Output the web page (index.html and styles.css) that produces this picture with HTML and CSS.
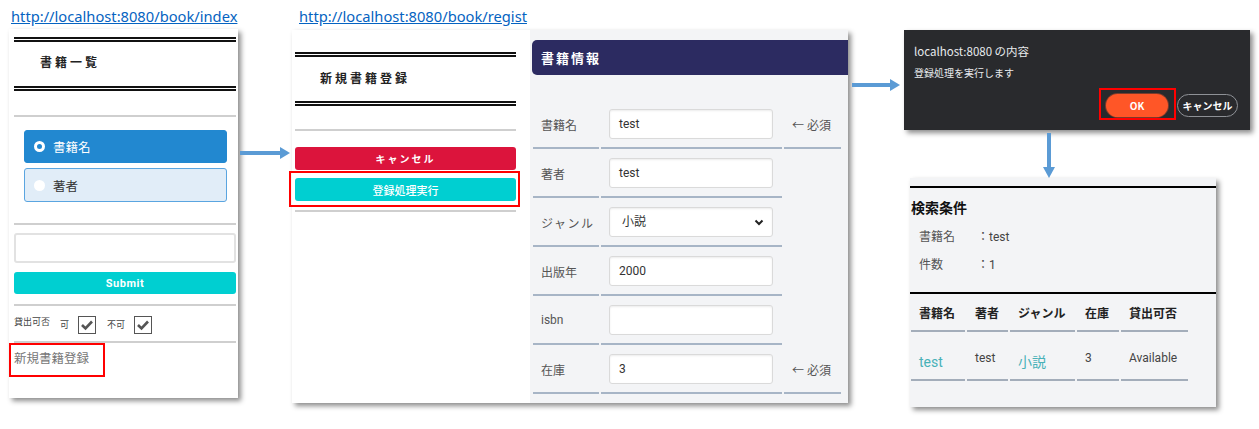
FILE: index.html
```html
<!DOCTYPE html>
<html lang="ja">
<head>
    <meta charset="UTF-8">
    <meta name="viewport" content="width=device-width, initial-scale=1.0">
    <title>書籍管理 | 新規登録の流れ</title>
    <link rel="stylesheet" href="styles.css">
</head>
<body>
<div class="canvas">

    <!-- 一覧画面 -->
    <a class="url url-index" href="#">http://localhost:8080/book/index</a>
    <section class="shot index-shot">
        <div class="dbl"></div>
        <h1 class="page-title">書籍一覧</h1>
        <div class="dbl"></div>
        <div class="rule rule-top"></div>
        <div class="radio-group">
            <label class="radio-box checked"><span class="dot"></span>書籍名</label>
            <label class="radio-box"><span class="dot"></span>著者</label>
        </div>
        <div class="rule rule-search"></div>
        <div class="search-input"></div>
        <button class="btn btn-cyan btn-submit">Submit</button>
        <div class="rule rule-submit"></div>
        <div class="check-row">
            <span class="check-title">貸出可否</span>
            <span class="check-label">可</span>
            <svg class="check" width="18" height="18" viewBox="0 0 18 18"><rect x="0.5" y="0.5" width="17" height="17" fill="#fff" stroke="#555"/><polyline points="4,9 7.5,12.5 14,5.5" fill="none" stroke="#555" stroke-width="2.6"/></svg>
            <span class="check-label">不可</span>
            <svg class="check" width="18" height="18" viewBox="0 0 18 18"><rect x="0.5" y="0.5" width="17" height="17" fill="#fff" stroke="#555"/><polyline points="4,9 7.5,12.5 14,5.5" fill="none" stroke="#555" stroke-width="2.6"/></svg>
        </div>
        <div class="rule rule-check"></div>
        <a class="new-link" href="#">新規書籍登録</a>
    </section>

    <!-- 登録画面 -->
    <a class="url url-regist" href="#">http://localhost:8080/book/regist</a>
    <section class="shot regist-shot">
        <div class="side">
            <div class="dbl"></div>
            <h1 class="page-title">新規書籍登録</h1>
            <div class="dbl"></div>
            <div class="rule rule-side"></div>
            <button class="btn btn-red">キャンセル</button>
            <button class="btn btn-cyan btn-regist">登録処理実行</button>
            <div class="rule rule-side-end"></div>
        </div>
        <div class="form-area">
            <div class="form-head">書籍情報</div>
            <table class="form-table">
                <tr>
                    <th>書籍名</th>
                    <td class="input-cell"><div class="field">test</div></td>
                    <td class="note">← 必須</td>
                </tr>
                <tr>
                    <th>著者</th>
                    <td class="input-cell"><div class="field">test</div></td>
                </tr>
                <tr>
                    <th class="wide">ジャンル</th>
                    <td class="input-cell">
                        <div class="field select">小説
                            <svg width="10" height="7" viewBox="0 0 10 7"><polyline points="1.5,1.5 5,5 8.5,1.5" fill="none" stroke="#222" stroke-width="2"/></svg>
                        </div>
                    </td>
                </tr>
                <tr>
                    <th>出版年</th>
                    <td class="input-cell"><div class="field">2000</div></td>
                </tr>
                <tr>
                    <th>isbn</th>
                    <td class="input-cell"><div class="field"></div></td>
                </tr>
                <tr>
                    <th>在庫</th>
                    <td class="input-cell"><div class="field">3</div></td>
                    <td class="note">← 必須</td>
                </tr>
            </table>
        </div>
    </section>

    <!-- 確認ダイアログ -->
    <section class="shot dialog">
        <p class="dlg-title">localhost:8080 の内容</p>
        <p class="dlg-msg">登録処理を実行します</p>
        <div class="dlg-actions">
            <button class="pill pill-ok">OK</button>
            <button class="pill pill-cancel">キャンセル</button>
        </div>
    </section>

    <!-- 検索結果 -->
    <section class="shot result-shot">
        <div class="black-line"></div>
        <h2 class="cond-title">検索条件</h2>
        <div class="cond">
            <div class="cond-row"><span class="cond-key">書籍名</span><span>：test</span></div>
            <div class="cond-row"><span class="cond-key">件数</span><span>：1</span></div>
        </div>
        <div class="black-line line-table"></div>
        <table class="result-table">
            <tr>
                <th class="c-name">書籍名</th>
                <th class="c-author">著者</th>
                <th class="c-genre">ジャンル</th>
                <th class="c-stock">在庫</th>
                <th class="c-lend">貸出可否</th>
            </tr>
            <tr>
                <td><a class="teal" href="#">test</a></td>
                <td>test</td>
                <td><a class="teal" href="#">小説</a></td>
                <td>3</td>
                <td>Available</td>
            </tr>
        </table>
    </section>

    <!-- 矢印 -->
    <svg class="arrow arrow-1" width="52" height="14" viewBox="0 0 52 14"><rect x="0" y="5" width="42" height="4" fill="#5b9bd5"/><polygon points="40,1 50,7 40,13" fill="#5b9bd5"/></svg>
    <svg class="arrow arrow-2" width="50" height="14" viewBox="0 0 50 14"><rect x="0" y="5" width="40" height="4" fill="#5b9bd5"/><polygon points="38,1 48,7 38,13" fill="#5b9bd5"/></svg>
    <svg class="arrow arrow-3" width="14" height="46" viewBox="0 0 14 46"><rect x="5" y="0" width="4" height="36" fill="#5b9bd5"/><polygon points="1,34 13,34 7,45" fill="#5b9bd5"/></svg>

    <!-- 赤枠 -->
    <div class="mark mark-link"></div>
    <div class="mark mark-btn"></div>
    <div class="mark mark-ok"></div>

</div>
</body>
</html>
```

FILE: styles.css
```css
/* General */
* {
    box-sizing: border-box;
}

body {
    margin: 0;
    background-color: #fff;
    font-family: Roboto, "Noto Sans CJK JP", sans-serif;
    color: #333;
}

.canvas {
    position: relative;
    width: 1259px;
    height: 429px;
    overflow: hidden;
}

.url {
    position: absolute;
    top: 7px;
    font-family: "Noto Sans", "Open Sans", sans-serif;
    font-size: 14.7px;
    line-height: 19px;
    color: #0563c1;
    text-decoration: underline;
}

.url-index {
    left: 11px;
}

.url-regist {
    left: 299px;
}

.shot {
    position: absolute;
    box-shadow: 3px 3px 5px rgba(0, 0, 0, 0.45);
}

/* shared bits */
.dbl {
    height: 5px;
    border-top: 2px solid #111;
    border-bottom: 2px solid #111;
}

.rule {
    height: 2px;
    background-color: #cfcfcf;
}

.page-title {
    margin: 0;
    font-family: "Noto Sans CJK JP", sans-serif;
    font-size: 12px;
    font-weight: 700;
    letter-spacing: 3px;
    color: #222;
}

.btn {
    display: block;
    width: 100%;
    border: none;
    border-radius: 3px;
    color: #fff;
    font-family: Roboto, "Noto Sans CJK JP", sans-serif;
    font-weight: 700;
    padding: 0;
}

.btn-cyan {
    background-color: #00cfd1;
}

.btn-red {
    background-color: #dc143c;
}

/* Index page */
.index-shot {
    left: 9px;
    top: 29px;
    width: 229px;
    height: 369px;
    background-color: #fff;
    padding: 0 2px 0 5px;
}

.index-shot .dbl:first-child {
    margin-top: 8px;
}

.index-shot .page-title {
    height: 40px;
    line-height: 40px;
    padding-left: 26px;
}

.index-shot .page-title + .dbl {
    margin-top: 4px;
}

.rule-top {
    margin-top: 24px;
}

.radio-group {
    padding: 13px 9px 0 10px;
}

.radio-box {
    display: flex;
    align-items: center;
    gap: 8px;
    height: 34px;
    padding-left: 9px;
    border: 1px solid #5aa5e0;
    border-radius: 3px;
    background-color: #e1edf8;
    font-family: "Noto Sans CJK JP", sans-serif;
    font-size: 12.5px;
    color: #333;
}

.radio-box + .radio-box {
    margin-top: 5px;
}

.radio-box.checked {
    height: 33px;
    background-color: #2288d0;
    border-color: #2288d0;
    color: #fff;
}

.dot {
    width: 11px;
    height: 11px;
    border-radius: 50%;
    background-color: #fff;
}

.checked .dot {
    background-color: transparent;
    border: 3px solid #fff;
}

.rule-search {
    margin-top: 21px;
}

.search-input {
    margin-top: 8px;
    height: 30px;
    border: 2px solid #e2e2e2;
    border-radius: 3px;
}

.btn-submit {
    margin-top: 9px;
    height: 22px;
    font-size: 11px;
    letter-spacing: 0.5px;
}

.rule-submit {
    margin-top: 10px;
}

.check-row {
    display: flex;
    align-items: center;
    height: 31px;
    margin-top: 3px;
    font-family: "Noto Sans CJK JP", sans-serif;
    font-size: 9px;
    color: #444;
}

.check-title {
    margin-bottom: 6px;
    margin-right: 10px;
}

.check-label {
    margin-right: 9px;
}

.check + .check-label {
    margin-left: 11px;
}

.rule-check {
    margin-top: 1px;
}

.new-link {
    display: block;
    margin-top: 6px;
    line-height: 18px;
    font-family: "Noto Sans CJK JP", sans-serif;
    font-size: 12.5px;
    color: #777;
    text-decoration: none;
}

/* Regist page */
.regist-shot {
    left: 292px;
    top: 30px;
    width: 556px;
    height: 373px;
    display: grid;
    grid-template-columns: 238px 318px;
}

.side {
    background-color: #fff;
    padding: 0 14px 0 3px;
}

.side .dbl:first-child {
    margin-top: 22px;
}

.side .page-title {
    height: 42px;
    line-height: 42px;
    padding-left: 25px;
}

.side .page-title + .dbl {
    margin-top: 2px;
}

.rule-side {
    margin-top: 23px;
}

.btn-red {
    margin-top: 16px;
    height: 23px;
    font-size: 10px;
    letter-spacing: 2px;
}

.btn-regist {
    margin-top: 8px;
    height: 23px;
    font-size: 11px;
    font-weight: 500;
}

.rule-side-end {
    margin-top: 9px;
}

.form-area {
    background-color: #f3f4f6;
}

.form-head {
    margin: 10px 0 0 2px;
    height: 35px;
    line-height: 35px;
    padding-left: 9px;
    background-color: #2c2b61;
    border-radius: 5px 0 0 5px;
    color: #fff;
    font-family: "Noto Sans CJK JP", sans-serif;
    font-size: 13px;
    font-weight: 700;
    letter-spacing: 2px;
}

.form-table {
    margin: 25px 0 0 1px;
    border-collapse: separate;
    border-spacing: 2px 0;
}

.form-table th,
.form-table td {
    padding: 9px 0 8px 8px;
    border-bottom: 2px solid #a7b5c6;
    vertical-align: middle;
    text-align: left;
    font-family: Roboto, "Noto Sans CJK JP", sans-serif;
    font-size: 12px;
    font-weight: 400;
    color: #444;
}

.form-table th {
    width: 66px;
    color: #555;
}

.form-table th.wide {
    letter-spacing: 1.5px;
}

.form-table .input-cell {
    width: 181px;
}

.form-table .note {
    width: 57px;
    color: #555;
}

.field {
    width: 164px;
    height: 30px;
    line-height: 28px;
    padding-left: 9px;
    background-color: #fff;
    border: 1px solid #dadada;
    border-radius: 3px;
    box-shadow: inset 0 1px 2px rgba(0, 0, 0, 0.08);
    color: #333;
}

.select {
    display: flex;
    align-items: center;
    justify-content: space-between;
    padding: 0 8px 0 12px;
}

/* Dialog */
.dialog {
    left: 904px;
    top: 30px;
    width: 346px;
    height: 100px;
    padding: 13px 12px 0 10px;
    background-color: #292a2d;
    color: #e8eaed;
    font-family: "Noto Sans CJK JP", sans-serif;
}

.dlg-title {
    margin: 0;
    font-size: 11.5px;
    line-height: 16px;
}

.dlg-msg {
    margin: 7px 0 0;
    font-size: 10px;
    line-height: 14px;
}

.dlg-actions {
    display: flex;
    justify-content: flex-end;
    gap: 9px;
    margin-top: 14px;
}

.pill {
    height: 23px;
    border-radius: 12px;
    font-family: "Noto Sans CJK JP", sans-serif;
    font-size: 10px;
    font-weight: 700;
    color: #fff;
    padding: 0;
}

.pill-ok {
    width: 62px;
    border: none;
    background-color: #ff5627;
    box-shadow: 0 0 0 1px #7c3b2b;
}

.pill-cancel {
    width: 61px;
    border: 1px solid #8e9196;
    background-color: transparent;
}

/* Result */
.result-shot {
    left: 910px;
    top: 178px;
    width: 306px;
    height: 229px;
    background-color: #f3f4f6;
}

.black-line {
    margin-top: 8px;
    height: 2px;
    background-color: #000;
}

.cond-title {
    margin: 9px 0 0 1px;
    font-family: "Noto Sans CJK JP", sans-serif;
    font-size: 14px;
    font-weight: 700;
    line-height: 20px;
    color: #111;
}

.cond {
    margin: 6px 0 0 9px;
}

.cond-row {
    display: flex;
    height: 28px;
    line-height: 28px;
    font-size: 12px;
    color: #444;
}

.cond-key {
    width: 58px;
    color: #555;
}

.line-table {
    margin-top: 13px;
}

.result-table {
    margin-left: -1px;
    border-collapse: separate;
    border-spacing: 2px 0;
}

.result-table th,
.result-table td {
    padding: 0 0 0 8px;
    border-bottom: 2px solid #a3adba;
    text-align: left;
    font-family: Roboto, "Noto Sans CJK JP", sans-serif;
    font-size: 12px;
}

.result-table th {
    height: 38px;
    font-weight: 700;
    color: #222;
    vertical-align: middle;
}

.result-table td {
    height: 49px;
    padding-top: 19px;
    vertical-align: top;
    color: #444;
}

.c-name { width: 54px; }
.c-author { width: 41px; }
.c-genre { width: 65px; }
.c-stock { width: 42px; }
.c-lend { width: 67px; }

.teal {
    display: inline-block;
    margin-top: 1px;
    font-size: 14px;
    line-height: 20px;
    color: #47b1b8;
    text-decoration: none;
}

/* Arrows and red marks */
.arrow {
    position: absolute;
}

.arrow-1 {
    left: 240px;
    top: 146px;
}

.arrow-2 {
    left: 852px;
    top: 78px;
}

.arrow-3 {
    left: 1042px;
    top: 133px;
}

.mark {
    position: absolute;
    border: 2px solid #f00;
}

.mark-link {
    left: 9px;
    top: 343px;
    width: 96px;
    height: 34px;
}

.mark-btn {
    left: 289px;
    top: 171px;
    width: 231px;
    height: 36px;
}

.mark-ok {
    left: 1099px;
    top: 88px;
    width: 77px;
    height: 32px;
}
```
